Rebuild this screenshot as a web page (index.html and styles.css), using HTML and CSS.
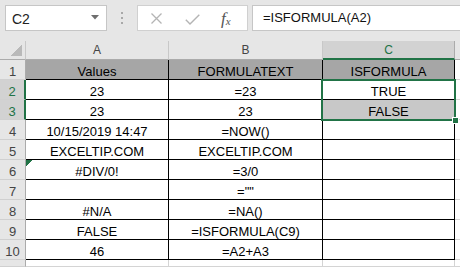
FILE: index.html
```html
<!DOCTYPE html>
<html>
<head>
<meta charset="utf-8">
<link rel="stylesheet" href="styles.css">
</head>
<body>
<div class="topbar">
  <div class="namebox">
    <span class="nb-text">C2</span>
    <svg class="nb-arrow" width="8" height="5" viewBox="0 0 8 5"><path d="M0 0H8L4 4.5Z" fill="#6e6e6e"/></svg>
  </div>
  <div class="dots"><i></i><i></i><i></i></div>
  <div class="fbuttons">
    <svg class="ic-x" width="11" height="11" viewBox="0 0 11 11"><path d="M0.5 0.5L10.5 10.5M10.5 0.5L0.5 10.5" stroke="#b4b4b4" stroke-width="1.3" fill="none"/></svg>
    <svg class="ic-check" width="15" height="11" viewBox="0 0 15 11"><path d="M0.8 5.8L5 10L14.3 0.7" stroke="#b4b4b4" stroke-width="1.4" fill="none"/></svg>
    <span class="fx"><i>f</i><sub>x</sub></span>
  </div>
  <div class="finput">=ISFORMULA(A2)</div>
</div>

<div class="sheet">
  <div class="cell corner"></div>
  <div class="cell colh">A</div>
  <div class="cell colh">B</div>
  <div class="cell colh sel">C</div>
  <div class="cell colh last"></div>

  <div class="cell rowh">1</div>
  <div class="cell t hd">Values</div>
  <div class="cell t hd">FORMULATEXT</div>
  <div class="cell t hd">ISFORMULA</div>
  <div class="cell d"></div>

  <div class="cell rowh sel">2</div>
  <div class="cell t">23</div>
  <div class="cell t">=23</div>
  <div class="cell t">TRUE</div>
  <div class="cell d"></div>

  <div class="cell rowh sel">3</div>
  <div class="cell t">23</div>
  <div class="cell t">23</div>
  <div class="cell t tint">FALSE</div>
  <div class="cell d"></div>

  <div class="cell rowh">4</div>
  <div class="cell t">10/15/2019 14:47</div>
  <div class="cell t">=NOW()</div>
  <div class="cell t"></div>
  <div class="cell d"></div>

  <div class="cell rowh">5</div>
  <div class="cell t">EXCELTIP.COM</div>
  <div class="cell t">EXCELTIP.COM</div>
  <div class="cell t"></div>
  <div class="cell d"></div>

  <div class="cell rowh">6</div>
  <div class="cell t err">#DIV/0!</div>
  <div class="cell t">=3/0</div>
  <div class="cell t"></div>
  <div class="cell d"></div>

  <div class="cell rowh">7</div>
  <div class="cell t"></div>
  <div class="cell t">=""</div>
  <div class="cell t"></div>
  <div class="cell d"></div>

  <div class="cell rowh">8</div>
  <div class="cell t">#N/A</div>
  <div class="cell t">=NA()</div>
  <div class="cell t"></div>
  <div class="cell d"></div>

  <div class="cell rowh">9</div>
  <div class="cell t">FALSE</div>
  <div class="cell t">=ISFORMULA(C9)</div>
  <div class="cell t"></div>
  <div class="cell d"></div>

  <div class="cell rowh">10</div>
  <div class="cell t">46</div>
  <div class="cell t">=A2+A3</div>
  <div class="cell t"></div>
  <div class="cell d"></div>

  <div class="cell rowh"></div>
  <div class="cell"></div>
  <div class="cell"></div>
  <div class="cell"></div>
  <div class="cell d"></div>

  <div class="selection"><span class="handle"></span></div>
</div>
</body>
</html>
```

FILE: styles.css
```css
html, body {
  margin: 0;
  padding: 0;
}
body {
  width: 460px;
  height: 267px;
  overflow: hidden;
  background: #e6e6e6;
  font-family: "Liberation Sans", Arial, sans-serif;
  color: #000;
}

/* ---------- formula bar ---------- */
.topbar {
  height: 41px;
  box-sizing: border-box;
  padding: 5px 0 0 5px;
  display: flex;
  align-items: flex-start;
  background: #e6e6e6;
}
.namebox {
  box-sizing: border-box;
  width: 102px;
  height: 26px;
  background: #fff;
  border: 1px solid #c6c6c6;
  display: flex;
  align-items: center;
  padding-left: 6px;
  padding-right: 7px;
}
.nb-text {
  font-size: 14px;
  color: #222;
  flex: 1;
  padding-top: 1px;
}
.nb-arrow {
  display: block;
  margin-top: -2px;
}
.dots {
  width: 30px;
  height: 26px;
  display: flex;
  flex-direction: column;
  align-items: center;
  justify-content: center;
  gap: 3px;
}
.dots i {
  display: block;
  width: 2px;
  height: 2px;
  background: #a8a8a8;
}
.fbuttons {
  box-sizing: border-box;
  width: 111px;
  height: 26px;
  background: #fff;
  border: 1px solid #d0d0d0;
  display: flex;
  align-items: center;
  padding-left: 13px;
}
.ic-x { display: block; margin-top: 1px; }
.ic-check { display: block; margin-left: 23px; margin-top: 2px; }
.fx {
  margin-left: 21px;
  font-family: "Liberation Serif", "Times New Roman", serif;
  font-size: 17px;
  color: #555;
  line-height: 1;
}
.fx i { font-style: italic; }
.fx sub { font-size: 11px; font-style: italic; vertical-align: -1px; }
.finput {
  box-sizing: border-box;
  flex: 1;
  height: 26px;
  margin-left: 4px;
  margin-right: -2px;
  background: #fff;
  border: 1px solid #c6c6c6;
  font-size: 13px;
  line-height: 24px;
  padding-left: 10px;
  color: #111;
}

/* ---------- sheet ---------- */
.sheet {
  position: relative;
  display: grid;
  grid-template-columns: 26px 143px 154px 132px 5px;
  grid-template-rows: 19px repeat(10, 20px) 7px;
  background: #fff;
}
.cell {
  box-sizing: border-box;
  border-right: 1px solid #d4d4d4;
  border-bottom: 1px solid #d4d4d4;
  text-align: center;
  font-size: 13px;
  line-height: 15px;
  padding-top: 4px;
  white-space: nowrap;
  overflow: hidden;
}
.cell.d { border-right: none; }

.corner {
  background: linear-gradient(to top left, #b9b9b9 50%, transparent 50%) right 3px bottom 3px / 12px 12px no-repeat, #e6e6e6;
  border-right-color: #c8c8c8;
  border-bottom-color: #ababab;
}
.colh {
  background: #e6e6e6;
  border-right-color: #c8c8c8;
  border-bottom-color: #ababab;
  font-size: 12px;
  line-height: 18px;
  padding-top: 0;
  color: #444;
}
.colh.sel {
  background: #d2d2d2;
  color: #217346;
  border-bottom: 2px solid #217346;
  border-right-color: #ababab;
}
.colh.last { border-right: none; }

.rowh {
  background: #e6e6e6;
  color: #444;
  border-right-color: #ababab;
  border-bottom-color: #d0d0d0;
}
.rowh.sel {
  background: #d2d2d2;
  color: #217346;
  border-right: 2px solid #217346;
}

.t {
  border-right-color: #000;
  border-bottom-color: #000;
}
.hd { background: #a6a6a6; }
.tint { background: #c8c8c8; }
.err {
  background: linear-gradient(135deg, #217346 0 4.3px, transparent 4.3px) left top / 6px 6px no-repeat;
}

.selection {
  position: absolute;
  left: 321px;
  top: 38px;
  width: 135px;
  height: 42px;
  box-sizing: border-box;
  border: 2px solid #217346;
  pointer-events: none;
}
.handle {
  position: absolute;
  right: -5px;
  bottom: -5px;
  width: 5px;
  height: 5px;
  background: #217346;
  border: 1px solid #fff;
}
```
